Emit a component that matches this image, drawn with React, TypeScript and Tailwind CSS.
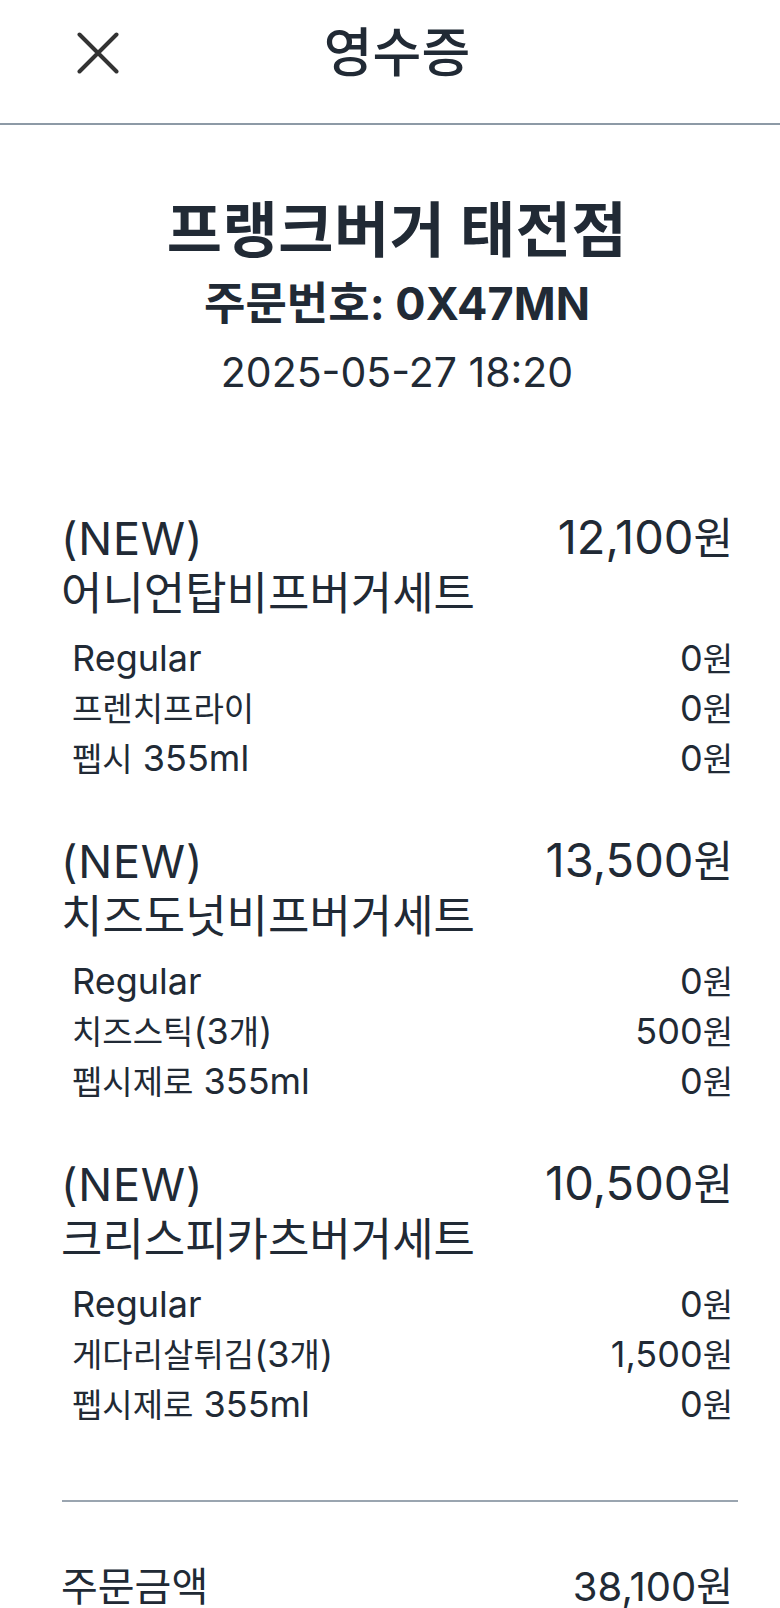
import React from "react";

type Opt = { name: string; price: string };
type Item = { title: string; name: string; price: string; opts: Opt[] };

const items: Item[] = [
  {
    title: "(NEW)",
    name: "어니언탑비프버거세트",
    price: "12,100원",
    opts: [
      { name: "Regular", price: "0원" },
      { name: "프렌치프라이", price: "0원" },
      { name: "펩시 355ml", price: "0원" },
    ],
  },
  {
    title: "(NEW)",
    name: "치즈도넛비프버거세트",
    price: "13,500원",
    opts: [
      { name: "Regular", price: "0원" },
      { name: "치즈스틱(3개)", price: "500원" },
      { name: "펩시제로 355ml", price: "0원" },
    ],
  },
  {
    title: "(NEW)",
    name: "크리스피카츠버거세트",
    price: "10,500원",
    opts: [
      { name: "Regular", price: "0원" },
      { name: "게다리살튀김(3개)", price: "1,500원" },
      { name: "펩시제로 355ml", price: "0원" },
    ],
  },
];

// Latin runs are drawn a little larger than Hangul runs, as in the reference font.
function Mix({ t, latin }: { t: string; latin: string }) {
  const parts = t.split(/([\uAC00-\uD7A3]+)/);
  return (
    <>
      {parts.map((p, i) =>
        p === "" ? null : /[\uAC00-\uD7A3]/.test(p) ? (
          <span key={i}>{p}</span>
        ) : (
          <span key={i} className={latin}>
            {p}
          </span>
        )
      )}
    </>
  );
}

function CloseIcon() {
  return (
    <svg width="42" height="42" viewBox="0 0 42 42" fill="none">
      <path d="M2.5 2.5L39.5 39.5M39.5 2.5L2.5 39.5" stroke="#333333" strokeWidth="4" strokeLinecap="round" />
    </svg>
  );
}

export default function App() {
  return (
    <div className="w-[780px] min-h-[1608px] bg-white text-[#212a35] font-[family-name:Inter,'Noto_Sans_CJK_KR',sans-serif]">
      <header className="h-[123px] pb-[18px] pl-[61px] pr-[47px] grid grid-cols-[1fr_auto_1fr] items-center">
        <div className="ml-[16px] flex items-center">
          <CloseIcon />
        </div>
        <h1 className="text-[53px] leading-[62px] font-medium">영수증</h1>
        <div />
      </header>
      <div className="h-[2px] bg-[#8d9aa6]" />

      <main className="pl-[61px] pr-[47px]">
        <section className="pt-[71px] text-center">
          <div className="text-[60px] leading-[68px] font-bold tracking-[0.5px]">프랭크버거 태전점</div>
          <div className="mt-[14px] text-[45px] leading-[52px] font-bold">주문번호: 0X47MN</div>
          <div className="mt-[18px] text-[41px] leading-[48px]">2025-05-27 18:20</div>
        </section>

        <section className="mt-[115px] flex flex-col gap-[50px]">
          {items.map((it, i) => (
            <div key={i} className="flex flex-col">
              <div className="flex justify-between items-start">
                <div className="flex flex-col">
                  <div className="text-[45px] leading-[55px] tracking-[0.8px]">{it.title}</div>
                  <div className="text-[45px] leading-[55px]">{it.name}</div>
                </div>
                <div className="h-[55px] text-[43px] leading-[55px]">
                  <Mix t={it.price} latin="text-[47px] leading-none" />
                </div>
              </div>
              <div className="mt-[13px] pl-[11px] flex flex-col text-[33px] leading-[50px]">
                {it.opts.map((o, j) => (
                  <div key={j} className="h-[50px] flex justify-between">
                    <span>
                      <Mix t={o.name} latin="text-[36px] leading-none" />
                    </span>
                    <span>
                      <Mix t={o.price} latin="text-[36px] leading-none" />
                    </span>
                  </div>
                ))}
              </div>
            </div>
          ))}
        </section>

        <div className="mt-[70px] ml-[1px] mr-[-5px] h-[2px] bg-[#9aa5b0]" />

        <section className="mt-[59px] flex justify-between text-[40px] leading-[52px]">
          <span>주문금액</span>
          <span>38,100원</span>
        </section>
      </main>
    </div>
  );
}
